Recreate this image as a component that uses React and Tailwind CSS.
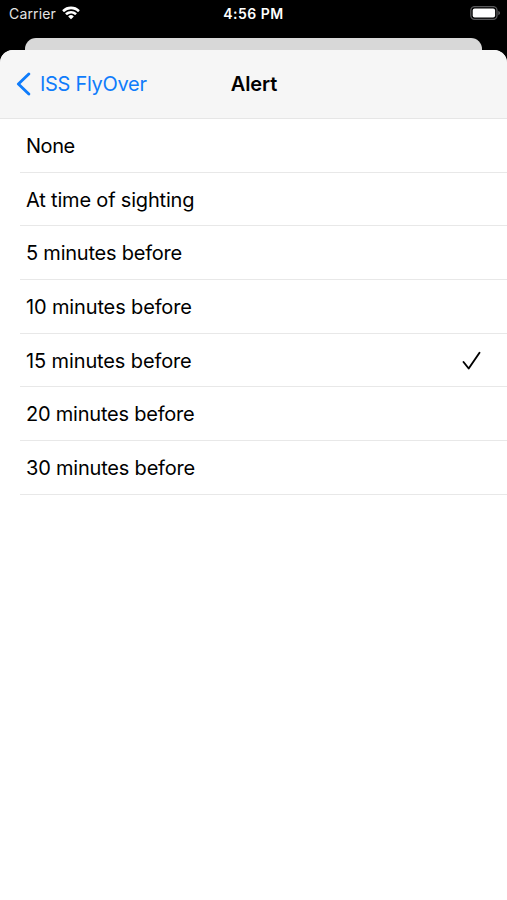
import React from 'react';

const options = [
    { label: 'None', tracking: 'tracking-[-0.45px]' },
    { label: 'At time of sighting', tracking: 'tracking-[-0.18px]' },
    { label: '5 minutes before', tracking: 'tracking-[-0.22px]' },
    { label: '10 minutes before', tracking: 'tracking-[-0.14px]' },
    { label: '15 minutes before', tracking: 'tracking-[-0.12px]' },
    { label: '20 minutes before', tracking: 'tracking-[-0.22px]' },
    { label: '30 minutes before', tracking: 'tracking-[-0.2px]' },
];

const WifiIcon = () => (
    <svg className="-mt-0.5 h-[15px] w-5" viewBox="0 0 20 15" fill="white">
        <path d="M10 3.2c2.6 0 5 1 6.8 2.7.15.13.36.13.5 0l1.3-1.35c.15-.15.15-.38 0-.53A12.4 12.4 0 0 0 10 .6 12.4 12.4 0 0 0 1.4 4.02c-.15.15-.15.38 0 .53L2.7 5.9c.14.13.35.13.5 0A9.8 9.8 0 0 1 10 3.2Z" />
        <path d="M10 7.5c1.4 0 2.75.53 3.8 1.48.15.14.38.13.52 0l1.3-1.34c.15-.15.15-.39 0-.53A8.2 8.2 0 0 0 10 4.9a8.2 8.2 0 0 0-5.62 2.21c-.15.14-.15.38 0 .53l1.3 1.34c.14.13.37.14.52 0A5.7 5.7 0 0 1 10 7.5Z" />
        <path d="M12.6 10.2c.15.14.15.38 0 .52l-2.33 2.36a.38.38 0 0 1-.54 0L7.4 10.72a.37.37 0 0 1 0-.52 4 4 0 0 1 5.2 0Z" />
    </svg>
);

const BatteryIcon = () => (
    <svg className="h-[15px] w-[31px]" viewBox="0 0 31 15">
        <rect x="0.8" y="0.6" width="26.2" height="12.8" rx="3.8" fill="none" stroke="#59595b" strokeWidth="1.3" />
        <rect x="2.7" y="2.4" width="22.4" height="9.2" rx="2" fill="white" />
        <path d="M28.4 4.9v4.4c.9-.4 1.5-1.2 1.5-2.2s-.6-1.8-1.5-2.2Z" fill="#6b6b6d" />
    </svg>
);

const StatusBar = () => (
    <div className="grid h-[38px] grid-cols-3 items-start pt-[5px] text-white">
        <div className="flex items-center gap-[5px] pl-[9px]">
            <span className="text-[14px] leading-[18px] tracking-[0.15px] text-[#e4e4e4]">Carrier</span>
            <WifiIcon />
        </div>
        <span className="text-center text-[14px] leading-[18px] font-semibold tracking-[0.5px]">4:56 PM</span>
        <div className="flex justify-end pt-px pr-[6px]">
            <BatteryIcon />
        </div>
    </div>
);

const NavBar = () => (
    <div className="grid h-[69px] grid-cols-3 items-center border-b border-[#e6e6e6] bg-[#f6f6f6]">
        <button className="flex items-center gap-[9px] pl-4 text-[#0f7cfb]">
            <svg className="h-6 w-[15px]" viewBox="0 0 15 24" fill="none" stroke="currentColor" strokeWidth="2.9" strokeLinecap="round" strokeLinejoin="round">
                <path d="M12.8 2 2.4 12l10.4 10" />
            </svg>
            <span className="text-[20px] leading-6 tracking-[-0.3px] whitespace-nowrap">ISS FlyOver</span>
        </button>
        <h1 className="pl-px text-center text-[20px] leading-6 font-semibold tracking-[-0.1px]">Alert</h1>
    </div>
);

const OptionRow = ({ option, selected }) => (
    <li className="ml-5 flex h-[53.67px] items-center justify-between border-b border-[#e8e8e8] pt-[1.4px] pr-[26px] pl-[6px]">
        <span className={`text-[20px] leading-6 ${option.tracking}`}>{option.label}</span>
        {selected && (
            <svg className="h-5 w-[19px]" viewBox="0 0 19 20" fill="none" stroke="currentColor" strokeWidth="1.9" strokeLinecap="round" strokeLinejoin="round">
                <path d="m1.5 11 5.2 6.5L17.5 1.8" />
            </svg>
        )}
    </li>
);

export default function App() {
    return (
        <div className="flex h-[900px] w-full flex-col overflow-hidden bg-black font-['Inter',sans-serif] text-black">
            <StatusBar />
            <div className="mx-[25px] h-3 shrink-0 rounded-t-[11px] bg-[#d8d8d8]" />
            <main className="flex-1 overflow-hidden rounded-t-[13px] bg-white">
                <NavBar />
                <ul>
                    {options.map(option => (
                        <OptionRow key={option.label} option={option} selected={option.label === '15 minutes before'} />
                    ))}
                </ul>
            </main>
        </div>
    );
}
